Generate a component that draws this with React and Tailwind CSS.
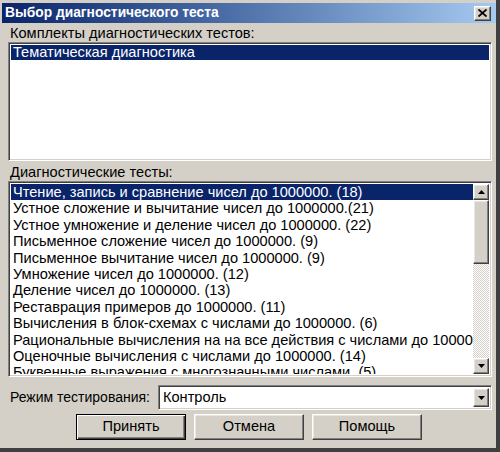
const KITS = ['Тематическая диагностика']

const TESTS = [
  'Чтение, запись и сравнение чисел до 1000000. (18)',
  'Устное сложение и вычитание чисел до 1000000.(21)',
  'Устное умножение и деление чисел до 1000000. (22)',
  'Письменное сложение чисел до 1000000. (9)',
  'Письменное вычитание чисел до 1000000. (9)',
  'Умножение чисел  до 1000000. (12)',
  'Деление чисел  до 1000000. (13)',
  'Реставрация примеров до 1000000. (11)',
  'Вычисления в блок-схемах с числами до 1000000. (6)',
  'Рациональные вычисления на на все действия с числами до 1000000. (7)',
  'Оценочные вычисления с числами до 1000000. (14)',
  'Буквенные выражения с многозначными числами. (5)',
]

const sunken =
  'border border-t-[#808080] border-l-[#808080] border-r-white border-b-white shadow-[inset_1px_1px_0_#404040,inset_-1px_-1px_0_#d4d0c8]'

const raised =
  'border border-t-white border-l-white border-r-[#404040] border-b-[#404040] shadow-[inset_-1px_-1px_0_#808080,inset_1px_1px_0_#e8e6e0] bg-[#d4d0c8]'

function Arrow({ up }) {
  return (
    <svg width="7" height="4" viewBox="0 0 7 4" aria-hidden="true">
      <path d={up ? 'M3.5 0 L7 4 L0 4 Z' : 'M0 0 L7 0 L3.5 4 Z'} fill="#000" />
    </svg>
  )
}

function ArrowButton({ up, className = '' }) {
  return (
    <div className={`flex items-center justify-center ${raised} ${className}`}>
      <Arrow up={up} />
    </div>
  )
}

function Button({ children, isDefault }) {
  return (
    <button
      type="button"
      className={`flex h-[26px] w-[110px] items-center justify-center text-[14.6px] text-black ${
        isDefault
          ? 'border border-black bg-[#d4d0c8] shadow-[inset_1px_1px_0_white,inset_-1px_-1px_0_#404040,inset_-2px_-2px_0_#808080]'
          : raised
      }`}
    >
      {children}
    </button>
  )
}

export default function App() {
  return (
    <div
      className="flex h-[452px] w-[500px] flex-col border-r-[4px] border-b-[4px] border-r-[#404040] border-b-[#404040] bg-[#d4d0c8] pl-[2px] pt-[3px] text-black"
      style={{ fontFamily: '"Liberation Sans", Arial, sans-serif' }}
    >
      <div className="flex h-[20px] items-center justify-between bg-gradient-to-r from-[#0a246a] to-[#a6caf0] pl-[3px] pr-[5px]">
        <span className="text-[13.8px] font-bold text-white">Выбор диагностического теста</span>
        <div className={`flex h-[15px] w-[17px] items-center justify-center ${raised}`}>
          <svg width="9" height="8" viewBox="0 0 9 8" aria-hidden="true">
            <path d="M0.5 0.5 L8.5 7.5 M8.5 0.5 L0.5 7.5" stroke="#000" strokeWidth="1.8" />
          </svg>
        </div>
      </div>

      <div className="flex flex-1 flex-col pl-[6px] pr-[4px]">
        <div className="mt-[3px] h-[15px] pl-[2px] text-[14.6px] leading-[15px]">
          Комплекты диагностических тестов:
        </div>
        <div className={`mt-[1px] h-[119px] bg-white p-[2px] ${sunken}`}>
          {KITS.map((kit) => (
            <div key={kit} className="h-[15px] bg-[#0a246a] pl-[2px] text-[14.6px] leading-[15px] text-white">
              {kit}
            </div>
          ))}
        </div>

        <div className="mt-[4px] h-[15px] pl-[2px] text-[14.6px] leading-[15px]">Диагностические тесты:</div>
        <div className={`mt-[1px] flex h-[196px] bg-white p-[2px] ${sunken}`}>
          <div className="flex-1 overflow-hidden">
            {TESTS.map((test, i) => (
              <div
                key={test}
                className={`h-[16.4px] whitespace-nowrap pl-[2px] text-[14.6px] leading-[16px] ${
                  i === 0 ? 'bg-[#0a246a] text-white' : ''
                }`}
              >
                {test}
              </div>
            ))}
          </div>
          <div className="flex w-[16px] flex-col bg-[repeating-conic-gradient(#d4d0c8_0_25%,#ffffff_0_50%)] bg-[length:2px_2px]">
            <ArrowButton up className="h-[16px]" />
            <div className={`h-[64px] ${raised}`} />
            <div className="flex-1" />
            <ArrowButton className="h-[16px]" />
          </div>
        </div>

        <div className="mt-[8px] flex items-center">
          <span className="w-[150px] pl-[2px] text-[14px]">Режим тестирования:</span>
          <div className={`flex h-[25px] flex-1 items-center bg-white p-[2px] ${sunken}`}>
            <span className="flex-1 pl-[2px] text-[14.6px]">Контроль</span>
            <ArrowButton className="h-full w-[16px]" />
          </div>
        </div>

        <div className="mt-[4px] flex gap-[8px] pl-[68px]">
          <Button isDefault>Принять</Button>
          <Button>Отмена</Button>
          <Button>Помощь</Button>
        </div>
      </div>
    </div>
  )
}
